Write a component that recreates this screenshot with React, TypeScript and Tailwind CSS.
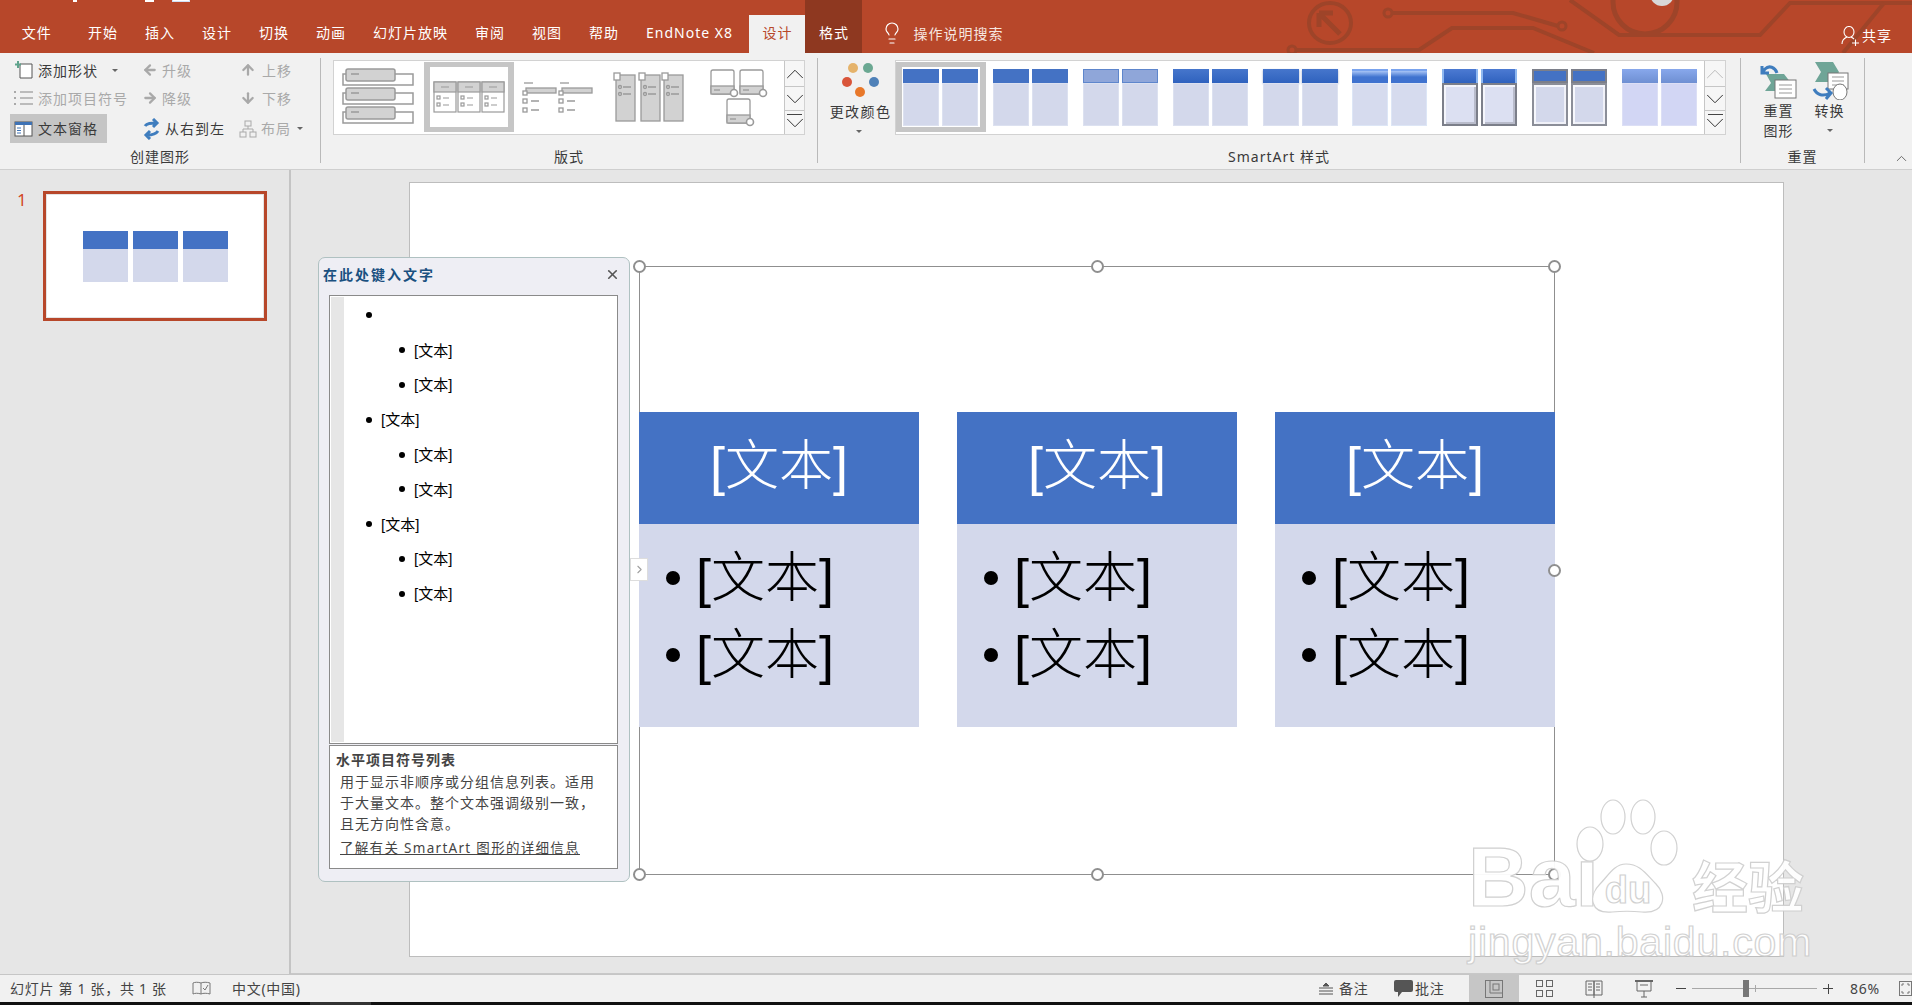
import { FC, ReactNode } from 'react';
import { ArrowDown, ArrowLeft, ArrowRight, ArrowUp, ChevronDown, ChevronRight, ChevronUp, Lightbulb, X } from 'lucide-react';

const tabs = ['开始', '插入', '设计', '切换', '动画', '幻灯片放映', '审阅', '视图', '帮助', 'EndNote X8'];

const Caret = () => <span className="inline-block h-0 w-0 border-x-[3px] border-t-[3px] border-x-transparent border-t-[#666]" />;

const Circuit = () => (
  <svg className="absolute left-[1272px] top-0" width="640" height="53" viewBox="0 0 640 53" fill="none" stroke="#9E4429" strokeWidth="4">
    <ellipse cx="58" cy="23" rx="21" ry="20" />
    <path d="M47 13 L47 27 M47 13 L61 13 M47 13 L68 34" strokeWidth="5" />
    <circle cx="116" cy="13" r="4" strokeWidth="3" />
    <path d="M120 13 H241 L286 26" />
    <circle cx="290" cy="26" r="4" strokeWidth="3" />
    <circle cx="20" cy="50" r="4" strokeWidth="3" />
    <path d="M24 50 H147 L180 28 H261 L322 53" />
    <circle cx="373" cy="2" r="32" strokeWidth="5" />
    <path d="M298 0 L347 35 H488 L518 3 H640" />
    <path d="M612 3 L571 53" />
    <circle cx="390" cy="-6" r="12" fill="#D8D8D8" stroke="none" />
  </svg>
);

const TitleBar = () => (
  <div className="relative flex h-[53px] items-end bg-[#B7472A] text-[14px] tracking-[1px] text-white">
    <Circuit />
    <div className="absolute left-[73px] top-0 h-[2px] w-[4px] bg-white" />
    <div className="absolute left-[145px] top-0 h-[2px] w-[9px] bg-white" />
    <div className="absolute left-[172px] top-0 h-[2px] w-[18px] border-x border-b border-[#CFE0F5] bg-white" />
    <div className="flex h-[38px] w-[74.5px] items-center justify-center pb-[3px] pr-[1px]">文件</div>
    {tabs.map((t) => (
      <div key={t} className="flex h-[38px] items-center px-[13.5px] pb-[3px]">{t}</div>
    ))}
    <div className="ml-[3px] flex h-[38px] w-[56px] items-center justify-center bg-[#F1F1F1] pb-[3px] text-[#B7472A]">设计</div>
    <div className="relative flex h-[53px] w-[57px] items-end bg-[#8E3820]">
      <span className="flex h-[38px] w-full items-center justify-center pb-[3px]">格式</span>
    </div>
    <div className="flex h-[38px] items-center pb-[2px] pl-[18px]">
      <Lightbulb size={24} strokeWidth={1.2} />
      <span className="ml-[9px] text-[#F6E6E0]">操作说明搜索</span>
    </div>
    <div className="absolute right-[20px] top-[25px] flex items-center gap-[3px]">
      <svg width="18" height="20" viewBox="0 0 18 20" fill="none" stroke="white" strokeWidth="1.1">
        <ellipse cx="8" cy="6" rx="5" ry="5.5" />
        <path d="M1 18 C1 13 4 12 6 11 M10 11 C11 11.5 12 12 13 13 M11 17 H18 M14.5 13.5 V20" />
      </svg>
      <span>共享</span>
    </div>
  </div>
);

const SmallBtn: FC<{ icon: ReactNode; label: string; off?: boolean; active?: boolean; caret?: boolean; caretGap?: string; className?: string }> = ({ icon, label, off, active, caret, caretGap, className }) => (
  <div className={`flex items-center gap-[4px] whitespace-nowrap ${off ? 'text-[#A9A9A9]' : 'text-[#3A3A3A]'} ${active ? 'bg-[#C5C5C5]' : ''} ${className ?? ''}`}>
    {icon}
    <span>{label}</span>
    {caret && <span className={`flex items-center ${caretGap ?? 'ml-[2px]'}`}><Caret /></span>}
  </div>
);

const LayoutThumb: FC<{ kind: number }> = ({ kind }) => {
  const g = '#D2D2D2';
  const s = '#9A9A9A';
  if (kind === 1) {
    return (
      <svg width="90" height="70" viewBox="0 0 90 70" fill="none" stroke={s} strokeWidth="1.5">
        {[7, 26, 45].map((y) => (
          <g key={y}>
            <rect x="9" y={y + 5} width="70" height="11" fill="white" />
            <rect x="12" y={y} width="49" height="12" rx="2" fill={g} />
            <path d={`M17 ${y + 5} H25`} />
          </g>
        ))}
      </svg>
    );
  }
  if (kind === 2) {
    return (
      <svg width="78" height="58" viewBox="0 0 78 58" fill="none" stroke={s} strokeWidth="1.2">
        {[4, 28, 52].map((x) => (
          <g key={x}>
            <rect x={x} y="14" width="22" height="30" fill="white" />
            <rect x={x} y="14" width="22" height="10" fill={g} />
            <path d={`M${x + 7} 19 H${x + 15} M${x + 9} 30 H${x + 15} M${x + 9} 37 H${x + 15}`} />
            <rect x={x + 3} y="28" width="3" height="3" />
            <rect x={x + 3} y="35" width="3" height="3" />
          </g>
        ))}
      </svg>
    );
  }
  if (kind === 3) {
    return (
      <svg width="90" height="70" viewBox="0 0 90 70" fill="none" stroke={s} strokeWidth="1.3">
        {[9, 45].map((x) => (
          <g key={x}>
            <path d={`M${x + 1} 21 H${x + 10}`} />
            <rect x={x + 3} y="26" width="30" height="5" fill={g} />
            <rect x={x} y="29" width="4" height="4" fill="white" />
            <rect x={x} y="37" width="4" height="4" />
            <rect x={x} y="46" width="4" height="4" />
            <path d={`M${x + 8} 39 H${x + 16} M${x + 8} 48 H${x + 16}`} />
          </g>
        ))}
      </svg>
    );
  }
  if (kind === 4) {
    return (
      <svg width="90" height="70" viewBox="0 0 90 70" fill="none" stroke={s} strokeWidth="1.3">
        {[12, 37, 60].map((x) => (
          <g key={x}>
            <rect x={x} y="13" width="19" height="46" fill={g} />
            <rect x={x - 2} y="11" width="6" height="7" fill="white" />
            <path d={`M${x + 7} 25 H${x + 15} M${x + 7} 32 H${x + 15}`} />
            <circle cx={x + 4} cy="25" r="1.5" />
            <circle cx={x + 4} cy="32" r="1.5" />
          </g>
        ))}
      </svg>
    );
  }
  return (
    <svg width="90" height="70" viewBox="0 0 90 70" fill="none" stroke={s} strokeWidth="1.3">
      {[[17, 8], [46, 8], [33, 37]].map(([x, y]) => (
        <g key={`${x}-${y}`}>
          <rect x={x} y={y} width="23" height="24" rx="2" fill="white" />
          <rect x={x} y={y + 16} width="23" height="8" fill={g} />
          <path d={`M${x + 3} ${y + 20} H${x + 9}`} />
          <circle cx={x + 23} cy={y + 23} r="3.5" fill="white" strokeWidth="1.6" />
        </g>
      ))}
    </svg>
  );
};

const GalleryScroll: FC<{ dim?: boolean }> = ({ dim }) => (
  <div className="flex w-[21px] flex-col overflow-hidden border-l border-[#C6C6C6] bg-[#F6F6F6] text-[#333]">
    <div className={`flex h-[26px] items-center justify-center border-b border-[#C6C6C6] ${dim ? 'text-[#BDBDBD]' : ''}`}><ChevronUp size={30} strokeWidth={0.8} className="shrink-0" /></div>
    <div className="flex h-[24px] items-center justify-center border-b border-[#C6C6C6]"><ChevronDown size={30} strokeWidth={0.8} className="shrink-0" /></div>
    <div className="flex h-[23px] flex-col items-center">
      <div className="mt-[3px] h-[1px] w-[15px] shrink-0 bg-[#444]" />
      <ChevronDown size={30} strokeWidth={0.8} className="mt-[-7px] shrink-0" />
    </div>
  </div>
);

const styleThumbs = [
  { head: 'bg-[#4472C4]', body: 'bg-[#D3D8EB] border border-[#DCE1F0]' },
  { head: 'bg-[#4472C4]', body: 'bg-[#D3D8EB] border border-[#DCE1F0]' },
  { head: 'bg-[#8FA6D9] border border-[#5E86CC]', body: 'bg-[#D3D8EB] border border-[#DCE1F0]' },
  { head: 'bg-gradient-to-b from-[#4676CC] to-[#2F62BE]', body: 'bg-[#D3D8EB] border border-[#DCE1F0]' },
  { head: 'bg-gradient-to-b from-[#4676CC] to-[#2F62BE] shadow-[0_1px_2px_#9AA7C8]', body: 'bg-[#D3D8EB] border border-[#DCE1F0]' },
  { head: 'bg-gradient-to-b from-[#A8C4F5] via-[#3F72CF] to-[#3F72CF] border-t-2 border-[#79A3EE]', body: 'bg-[#D6DBEE] border border-[#DDE6F6]' },
  { head: 'bg-gradient-to-b from-[#4C7AD2] to-[#2F62BE] border-x-2 border-[#8FB8F0]', body: 'bg-[#DCE0F2] border-2 border-[#7C7F8A] shadow-[inset_2px_2px_0_#F4F5FB,inset_-2px_-2px_0_#B9BCCB]' },
  { head: 'bg-[#4472C4] border-2 border-[#7C7F8A]', body: 'bg-[#D3D8EB] border-2 border-[#8B8E98] shadow-[inset_2px_2px_0_#F6F7FC,inset_-2px_-2px_0_#F0F1F8]' },
  { head: 'bg-gradient-to-b from-[#88A8EC] to-[#6E8FD2]', body: 'bg-[#D2D6F4] border border-[#DCDFF5]' },
];

const Ribbon = () => (
  <div className="flex h-[117px] border-b border-[#CFCFCF] bg-[#F1F1F1] py-[5px] text-[14px] tracking-[1px] text-[#3A3A3A]">
    {/* 创建图形 */}
    <div className="flex h-[105px] w-[321px] flex-col justify-between border-r border-[#B9B9B9]">
      <div className="-mt-[2px] flex pl-[10px]">
        <div className="flex w-[132px] flex-col">
          <SmallBtn className="h-[28px] pl-[4px]" caret caretGap="ml-[10px]" label="添加形状" icon={
            <svg width="20" height="20" viewBox="0 0 20 20" fill="none">
              <path d="M6 4 H18 V18 H6 Z" stroke="#555" fill="white" />
              <path d="M4 1 V8 M1 4.5 H7" stroke="#5FA38C" strokeWidth="2" />
            </svg>
          } />
          <SmallBtn off className="h-[28px] pl-[4px]" label="添加项目符号" icon={
            <svg width="20" height="16" viewBox="0 0 20 16" fill="none" stroke="#A9A9A9" strokeWidth="1.5">
              <path d="M6 2 H19 M6 8 H19 M6 14 H19" />
              <path d="M1 1 V3 M1 7 V9 M1 13 V15" strokeWidth="2" />
            </svg>
          } />
          <SmallBtn active className="mt-[2px] h-[29px] w-[97px] pl-[4px]" label="文本窗格" icon={
            <svg width="20" height="16" viewBox="0 0 20 16" fill="none">
              <rect x="1" y="1" width="17" height="14" fill="white" stroke="#555" />
              <rect x="1" y="1" width="17" height="3" fill="#3F73B5" />
              <path d="M3 7 H7 M3 9.5 H7 M3 12 H7" stroke="#3F73B5" />
              <path d="M10 4 V15" stroke="#555" />
            </svg>
          } />
        </div>
        <div className="flex w-[97px] flex-col">
          <SmallBtn off className="h-[28px]" label="升级" icon={<ArrowLeft size={16} strokeWidth={3.4} />} />
          <SmallBtn off className="h-[28px]" label="降级" icon={<ArrowRight size={16} strokeWidth={3.4} />} />
          <SmallBtn className="mt-[2px] h-[29px]" label="从右到左" icon={
            <svg width="19" height="22" viewBox="0 0 19 22" fill="none" stroke="#3F7DBE" strokeWidth="3">
              <path d="M3 8 C5 5 9 5 14 5 M11 1 L15 5 L11 9" />
              <path d="M16 13 C14 16 10 17 5 17 M8 13 L4 17 L8 21" />
            </svg>
          } />
        </div>
        <div className="flex flex-col">
          <SmallBtn off className="h-[28px] pl-[1px]" label="上移" icon={<ArrowUp size={16} strokeWidth={3.4} className="mr-[2px]" />} />
          <SmallBtn off className="h-[28px] pl-[1px]" label="下移" icon={<ArrowDown size={16} strokeWidth={3.4} className="mr-[2px]" />} />
          <SmallBtn off caret className="mt-[2px] h-[29px]" label="布局" icon={
            <svg width="18" height="18" viewBox="0 0 18 18" fill="none" stroke="#A9A9A9">
              <rect x="6" y="1" width="6" height="5" />
              <rect x="1" y="12" width="6" height="5" />
              <rect x="11" y="12" width="6" height="5" />
              <path d="M9 6 V9 M4 12 V9 H14 V12" />
            </svg>
          } />
        </div>
      </div>
      <div className="mb-[-1px] text-center leading-[14px]">创建图形</div>
    </div>

    {/* 版式 */}
    <div className="flex h-[105px] w-[497px] flex-col justify-between border-r border-[#B9B9B9]">
      <div className="ml-[12px] mt-[2px] flex h-[75px] w-[472px] border border-[#D2D2D2] bg-white">
        {[1, 2, 3, 4, 5].map((k) => (
          <div key={k} className={`mt-px flex h-[70px] w-[90px] items-center justify-center ${k === 2 ? 'border-x-[6px] border-y-[5px] border-[#C6C6C6]' : ''}`}>
            <LayoutThumb kind={k} />
          </div>
        ))}
        <div className="flex-1" />
        <GalleryScroll />
      </div>
      <div className="mb-[-1px] text-center leading-[14px]">版式</div>
    </div>

    {/* SmartArt 样式 */}
    <div className="flex h-[105px] w-[923px] flex-col justify-between border-r border-[#B9B9B9]">
      <div className="flex">
        <div className="ml-[4px] flex w-[73px] flex-col items-center">
          <svg className="mt-[3px]" width="40" height="40" viewBox="0 0 40 40">
            <circle cx="14" cy="7" r="5" fill="#E5B36B" />
            <circle cx="29" cy="7" r="5" fill="#6BA892" />
            <circle cx="8" cy="21" r="5" fill="#D9553A" />
            <circle cx="35" cy="21" r="5" fill="#4F81B8" />
            <circle cx="21" cy="31" r="5" fill="#E8782A" />
          </svg>
          <span className="ml-[4px] mt-[1px] whitespace-nowrap leading-[20px] tracking-[1.4px]">更改颜色</span>
          <span className="mt-[8px] flex"><Caret /></span>
        </div>
        <div className="mt-[2px] flex h-[75px] w-[831px] border border-[#D2D2D2] bg-white">
          {styleThumbs.map((t, i) => (
            <div key={i} className={`mt-px flex h-[70px] w-[90px] justify-center gap-[3px] ${i === 0 ? 'border-x-[6px] border-y-[5px] border-[#C6C6C6] pt-[2px]' : 'px-[7px] pt-[7px]'}`}>
              {[0, 1].map((c) => (
                <div key={c} className="flex h-[57px] w-[36px] flex-col">
                  <div className={`h-[14px] ${t.head}`} />
                  <div className={`flex-1 ${t.body}`} />
                </div>
              ))}
            </div>
          ))}
          <div className="flex-1" />
          <GalleryScroll dim />
        </div>
      </div>
      <div className="mb-[-1px] text-center leading-[14px]">SmartArt 样式</div>
    </div>

    {/* 重置 */}
    <div className="flex h-[105px] w-[124px] flex-col justify-between border-r border-[#B9B9B9]">
      <div className="flex pl-[12px] leading-[20px]">
        <div className="flex w-[51px] flex-col items-center">
          <svg className="mt-[5px]" width="38" height="36" viewBox="0 0 38 36" fill="none">
            <path d="M6 11 H24 L31 20 L25 28 H5 L11 20 Z" fill="#6FA597" />
            <rect x="15" y="17" width="21" height="18" fill="white" stroke="#777" />
            <path d="M19 22 H32 M19 26 H32 M19 30 H32" stroke="#999" />
            <path d="M17 10 C15 4 9 2 5 6 L3 9 M2 3 V10 H9" stroke="#3F7DBE" strokeWidth="3" />
          </svg>
          <span className="mt-[2px] whitespace-nowrap">重置</span>
          <span className="whitespace-nowrap">图形</span>
        </div>
        <div className="flex w-[51px] flex-col items-center">
          <svg className="mt-[4px]" width="38" height="38" viewBox="0 0 38 38" fill="none">
            <path d="M4 0 H22 L28 10 L22 20 H4 L10 10 Z" fill="#6FA597" />
            <rect x="17" y="11" width="20" height="16" fill="white" stroke="#777" />
            <path d="M21 15 H33 M21 19 H33 M21 23 H33" stroke="#999" />
            <ellipse cx="29" cy="30" rx="7" ry="8" fill="white" stroke="#777" />
            <path d="M3 27 C6 33 12 35 19 31 M15 26 L20 31 L15 37" stroke="#3F7DBE" strokeWidth="3" />
          </svg>
          <span className="mt-[1px] whitespace-nowrap">转换</span>
          <span className="mt-[8px] flex"><Caret /></span>
        </div>
      </div>
      <div className="mb-[-1px] text-center leading-[14px]">重置</div>
    </div>
    <div className="flex flex-1 items-end justify-end pr-[2px] text-[#555]">
      <ChevronUp size={17} strokeWidth={1.2} className="mb-[-3px]" />
    </div>
  </div>
);

const Thumbnail = () => (
  <div className="flex w-[291px] shrink-0 border-r-2 border-[#C4C4C4] pt-[21px]">
    <div className="w-[43px] pl-[17px] text-[17px] leading-[18px] text-[#D24726]">1</div>
    <div className="flex h-[130px] w-[224px] items-center justify-center gap-[5px] border-[3px] border-[#B7472A] bg-white outline outline-1 -outline-offset-4 outline-[#E4E4E4]">
      {[0, 1, 2].map((i) => (
        <div key={i} className="flex w-[45px] flex-col">
          <div className="h-[18px] bg-[#4472C4]" />
          <div className="h-[33px] bg-[#D3D8EB]" />
        </div>
      ))}
    </div>
  </div>
);

const TreeRow: FC<{ level: number; text?: string }> = ({ level, text }) => (
  <div className={`flex h-[34.8px] items-center ${level === 1 ? 'pl-[22px]' : 'pl-[55px]'}`}>
    <span className="size-[6px] rounded-full bg-black" />
    {text && <span className="ml-[9px] font-['Liberation_Sans','Noto_Sans_CJK_SC',sans-serif] text-[15px] leading-none text-black">{text}</span>}
  </div>
);

const TextPane = () => (
  <div className="absolute left-[-92px] top-[74px] z-10 h-[625px] w-[312px] rounded-[7px] border border-[#AFC1C1] bg-[#EEEEF4] text-[14px]">
    <div className="flex h-[37px] items-center justify-between pb-[4px] pl-[4px] pr-[9px]">
      <span className="font-bold tracking-[2px] text-[#1A5080]">在此处键入文字</span>
      <X size={15} strokeWidth={2.6} className="text-[#555]" />
    </div>
    <div className="ml-[10px] flex h-[449px] w-[289px] border border-[#8A8A8A] bg-white p-[1px]">
      <div className="h-full w-[13px] bg-[#E6E6E6]" />
      <div className="flex-1 pt-[1px]">
        <TreeRow level={1} />
        <TreeRow level={2} text="[文本]" />
        <TreeRow level={2} text="[文本]" />
        <TreeRow level={1} text="[文本]" />
        <TreeRow level={2} text="[文本]" />
        <TreeRow level={2} text="[文本]" />
        <TreeRow level={1} text="[文本]" />
        <TreeRow level={2} text="[文本]" />
        <TreeRow level={2} text="[文本]" />
      </div>
    </div>
    <div className="ml-[10px] mt-[1px] h-[124px] w-[289px] border border-[#8A8A8A] bg-white pl-[6px] pt-[3px] tracking-[1px] text-[#444]">
      <div className="font-bold leading-[21px]">水平项目符号列表</div>
      <div className="mt-[1px] w-[270px] pl-[4px] leading-[21px]">用于显示非顺序或分组信息列表。适用于大量文本。整个文本强调级别一致，且无方向性含意。</div>
      <div className="mt-[5px] pl-[4px] text-[13.5px] leading-[18px] tracking-[1.3px] underline">了解有关 SmartArt 图形的详细信息</div>
    </div>
  </div>
);

const handleSpots = [
  '-left-[7px] -top-[7px]',
  'left-[451px] -top-[7px]',
  '-right-[7px] -top-[7px]',
  '-right-[7px] top-[297px]',
  '-left-[7px] -bottom-[7px]',
  'left-[451px] -bottom-[7px]',
  '-right-[7px] -bottom-[7px]',
];

const SmartArt = () => (
  <div className="absolute left-[229px] top-[83px] h-[609px] w-[916px] border border-[#8F8F8F]">
    <div className="-ml-px mt-[145px] flex gap-[38px] font-['Liberation_Sans','Noto_Sans_CJK_SC',sans-serif] font-light">
      {[0, 1, 2].map((i) => (
        <div key={i} className="w-[280px] shrink-0">
          <div className="flex h-[112px] items-center justify-center bg-[#4472C4] pb-[3px] text-[54px] text-white">[文本]</div>
          <div className="h-[203px] bg-[#D3D8EB] pl-[27px] pt-[15px] text-[54px] text-black">
            {[0, 1].map((r) => (
              <div key={r} className="flex h-[77px] items-center gap-[16px]">
                <span className="size-[14px] rounded-full bg-black" />
                <span className="leading-none">[文本]</span>
              </div>
            ))}
          </div>
        </div>
      ))}
    </div>
    {handleSpots.map((s) => (
      <span key={s} className={`absolute size-[13px] rounded-full border-2 border-[#8F8F8F] bg-white ${s}`} />
    ))}
    <div className="absolute -left-[10px] top-[291px] flex h-[23px] w-[18px] items-center justify-center border border-[#DDD] bg-white text-[#A0A0A0]">
      <ChevronRight size={13} strokeWidth={2} />
    </div>
  </div>
);

const Watermark = () => (
  <div className="pointer-events-none absolute left-[1468px] top-[796px] z-20 w-[350px] font-['Liberation_Sans',sans-serif] text-white opacity-95 [-webkit-text-stroke:1.2px_#CFCFCF]">
    <div className="flex h-[116px] items-end">
      <span className="mb-[-4px] w-[108px] text-[84px] font-bold leading-[78px]">Bai</span>
      <svg className="mb-[-2px] shrink-0" width="106" height="116" viewBox="0 0 106 116" fill="white" stroke="#CFCFCF" strokeWidth="1.2">
        <ellipse cx="14" cy="46" rx="13" ry="17" />
        <ellipse cx="37" cy="19" rx="12" ry="17" />
        <ellipse cx="67" cy="19" rx="12" ry="17" />
        <ellipse cx="88" cy="50" rx="13" ry="17" />
        <path d="M50 66 C38 66 32 78 24 86 C12 98 14 116 36 114 C46 113 56 113 66 114 C88 116 92 98 80 86 C70 76 64 66 50 66 Z" />
        <text x="52" y="105" textAnchor="middle" fontSize="38" fontWeight="700" fontFamily="Liberation Sans">du</text>
      </svg>
      <span className="mb-[-2px] ml-[10px] whitespace-nowrap font-['Noto_Sans_CJK_SC',sans-serif] text-[56px] font-bold leading-[60px]">经验</span>
    </div>
    <div className="mt-[8px] whitespace-nowrap text-[41px] leading-[44px] tracking-[0.8px]">jingyan.baidu.com</div>
  </div>
);

const ViewIcon: FC<{ children: ReactNode; active?: boolean }> = ({ children, active }) => (
  <div className={`flex h-full w-[50px] items-center justify-center ${active ? 'bg-[#C6C6C6]' : ''}`}>{children}</div>
);

const StatusBar = () => (
  <div className="flex h-[28px] items-center border-t border-[#C6C6C6] bg-[#F1F1F1] pl-[10px] text-[14px] tracking-[0.7px] text-[#444]">
    <span className="w-[182px] whitespace-nowrap">幻灯片 第 1 张，共 1 张</span>
    <svg width="19" height="16" viewBox="0 0 19 16" fill="none" stroke="#777">
      <path d="M9 2 C6 1 3 1 1 2 V13 C3 12 6 12 9 13 C11 12 15 12 18 13 V2 C15 1 11 1 9 2 Z M9 2 V13" />
      <path d="M11 7 L13 9 L16 4" />
    </svg>
    <span className="ml-[21px] whitespace-nowrap">中文(中国)</span>
    <div className="flex-1" />
    <div className="flex h-full items-center">
      <svg width="14" height="14" viewBox="0 0 14 14" fill="none" stroke="#555">
        <path d="M0 9 H14 M0 12 H14 M0 6 H14" />
        <path d="M4 4 L7 1 L10 4 Z" fill="#555" />
      </svg>
      <span className="ml-[6px] w-[55px] whitespace-nowrap">备注</span>
      <svg width="19" height="17" viewBox="0 0 19 17">
        <path d="M2 0 H17 Q19 0 19 2 V10 Q19 12 17 12 H8 L4 17 V12 H2 Q0 12 0 10 V2 Q0 0 2 0 Z" fill="#555" />
      </svg>
      <span className="ml-[2px] w-[54px] whitespace-nowrap">批注</span>
      <ViewIcon active>
        <svg width="18" height="18" viewBox="0 0 18 18" fill="none" stroke="#777"><rect x="0.5" y="0.5" width="17" height="17" /><path d="M5 1 V13 H17" /><rect x="8" y="4" width="6" height="6" /></svg>
      </ViewIcon>
      <ViewIcon>
        <svg width="17" height="17" viewBox="0 0 17 17" fill="none" stroke="#666"><rect x="0.5" y="0.5" width="6" height="6" /><rect x="10.5" y="0.5" width="6" height="6" /><rect x="0.5" y="10.5" width="6" height="6" /><rect x="10.5" y="10.5" width="6" height="6" /></svg>
      </ViewIcon>
      <ViewIcon>
        <svg width="18" height="18" viewBox="0 0 18 18" fill="none" stroke="#666"><path d="M1 1 H9 V15 H1 Z M9 1 H17 V15 H9 Z M3 4 H7 M3 7 H7 M3 10 H7 M11 4 H15 M11 7 H15 M11 10 H15 M9 15 V18" /></svg>
      </ViewIcon>
      <ViewIcon>
        <svg width="18" height="18" viewBox="0 0 18 18" fill="none" stroke="#666"><path d="M0 1 H18" strokeWidth="2" /><path d="M2 1 V11 H16 V1 M9 11 V17 M6 17 H12 M5 5 H13" /></svg>
      </ViewIcon>
      <span className="ml-[7px] mr-[6px] h-px w-[10px] bg-[#444]" />
      <div className="relative h-px w-[125px] bg-[#A8A8A8]">
        <span className="absolute left-[51px] top-[-8px] h-[17px] w-[6px] bg-[#777]" />
        <span className="absolute left-[63px] top-[-3px] h-[7px] w-px bg-[#A8A8A8]" />
      </div>
      <span className="relative ml-[6px] size-[10px]">
        <span className="absolute left-0 top-[4.5px] h-px w-[10px] bg-[#444]" />
        <span className="absolute left-[4.5px] top-0 h-[10px] w-px bg-[#444]" />
      </span>
      <span className="ml-[17px] w-[49px]">86%</span>
      <svg width="13" height="15" viewBox="0 0 13 15" fill="none" stroke="#777"><rect x="0.5" y="0.5" width="12" height="14" /><path d="M3 3 H5 M3 3 V5 M10 3 H8 M10 3 V5 M3 12 H5 M3 12 V10 M10 12 H8 M10 12 V10" /></svg>
    </div>
  </div>
);

const App: FC = () => (
  <div className="relative flex h-[1005px] w-[1912px] flex-col overflow-hidden bg-[#E6E6E6] font-['Noto_Sans','Noto_Sans_CJK_SC',sans-serif]">
    <TitleBar />
    <Ribbon />
    <div className="flex h-[804px] bg-[#E6E6E6]">
      <Thumbnail />
      <div className="flex-1 border-b border-[#C8C8C8] pb-[2px] pl-[118px] pt-[12px]">
        <div className="relative h-[775px] w-[1375px] border border-[#BDBDBD] bg-white">
          <TextPane />
          <SmartArt />
        </div>
      </div>
    </div>
    <StatusBar />
    <div className="flex h-[3px] bg-[#111]">
      <div className="ml-[310px] h-full w-[61px] bg-[#333]" />
    </div>
    <Watermark />
  </div>
);

export default App;
